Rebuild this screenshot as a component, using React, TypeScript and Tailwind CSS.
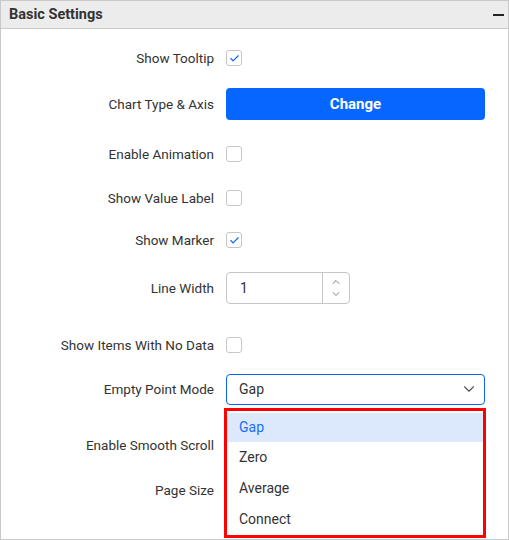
import { ChevronDown, ChevronUp, Check } from 'lucide-react'

const font = { fontFamily: 'Roboto, "Liberation Sans", sans-serif' }

function Box({ checked }: { checked?: boolean }) {
  return (
    <div className="w-4 h-4 rounded-[3px] border border-[#c6c6c6] bg-white flex items-center justify-center">
      {checked && <Check className="w-[11px] h-[11px] text-[#0a64f5]" strokeWidth={2.5} />}
    </div>
  )
}

function Row({ label, mt, children }: { label: string; mt: string; children: React.ReactNode }) {
  return (
    <div className={`flex items-center h-8 ${mt}`}>
      <div className="w-[213px] text-right text-[13.5px] text-[#333]">{label}</div>
      <div className="ml-3 flex-1 flex items-center">{children}</div>
    </div>
  )
}

export default function App() {
  return (
    <div className="w-[509px] h-[540px] bg-white relative overflow-hidden" style={font}>
      <div className="w-full h-full border border-[#c9c9c9] flex flex-col">
        <div className="h-[28px] bg-[#ececec] border-b border-[#c9c9c9] flex items-center justify-between pl-2 pr-[4px] shrink-0">
          <span className="text-[14.5px] font-bold text-[#333]">Basic Settings</span>
          <span className="w-[11px] h-[2px] bg-[#222] mt-[1px]"></span>
        </div>

        <Row label="Show Tooltip" mt="mt-[13px]"><Box checked /></Row>
        <Row label="Chart Type & Axis" mt="mt-[14px]">
          <button className="w-[259px] h-8 rounded-[4px] bg-[#0766ff] text-white text-[15px] font-bold">Change</button>
        </Row>
        <Row label="Enable Animation" mt="mt-[18px]"><Box /></Row>
        <Row label="Show Value Label" mt="mt-[12px]"><Box /></Row>
        <Row label="Show Marker" mt="mt-[10px]"><Box checked /></Row>
        <Row label="Line Width" mt="mt-[16px]">
          <div className="w-[124px] h-8 rounded-[4px] border border-[#c6c6c6] flex">
            <div className="flex-1 flex items-center pl-[13px] text-[14px] text-[#333]">1</div>
            <div className="w-[27px] border-l border-[#c6c6c6] flex flex-col items-center justify-center text-[#555]">
              <ChevronUp className="w-[12px] h-[12px]" strokeWidth={1.5} />
              <ChevronDown className="w-[12px] h-[12px]" strokeWidth={1.5} />
            </div>
          </div>
        </Row>
        <Row label="Show Items With No Data" mt="mt-[25px]"><Box /></Row>
        <Row label="Empty Point Mode" mt="mt-[12px]">
          <div className="w-[259px] h-[31px] rounded-[4px] border border-[#0a64f5] flex items-center justify-between pl-3 pr-[6px] text-[14px] text-[#333]">
            <span>Gap</span>
            <ChevronDown className="w-[18px] h-[18px] text-[#555]" strokeWidth={1.5} />
          </div>
        </Row>
        <Row label="Enable Smooth Scroll" mt="mt-[24px]"><span /></Row>
        <Row label="Page Size" mt="mt-[13px]"><span /></Row>
      </div>

      <div className="absolute left-[224px] top-[408px] w-[262px] h-[130px] border-[3px] border-[#ff0000] bg-white text-[14px] text-[#333]">
        <div className="h-[2px]" />
        <div className="h-[29px] bg-[#dce8fb] text-[#1a6ff0] flex items-center pl-3">Gap</div>
        <div className="h-[31px] flex items-center pl-3">Zero</div>
        <div className="h-[31px] flex items-center pl-3">Average</div>
        <div className="h-[31px] flex items-center pl-3">Connect</div>
      </div>
    </div>
  )
}
